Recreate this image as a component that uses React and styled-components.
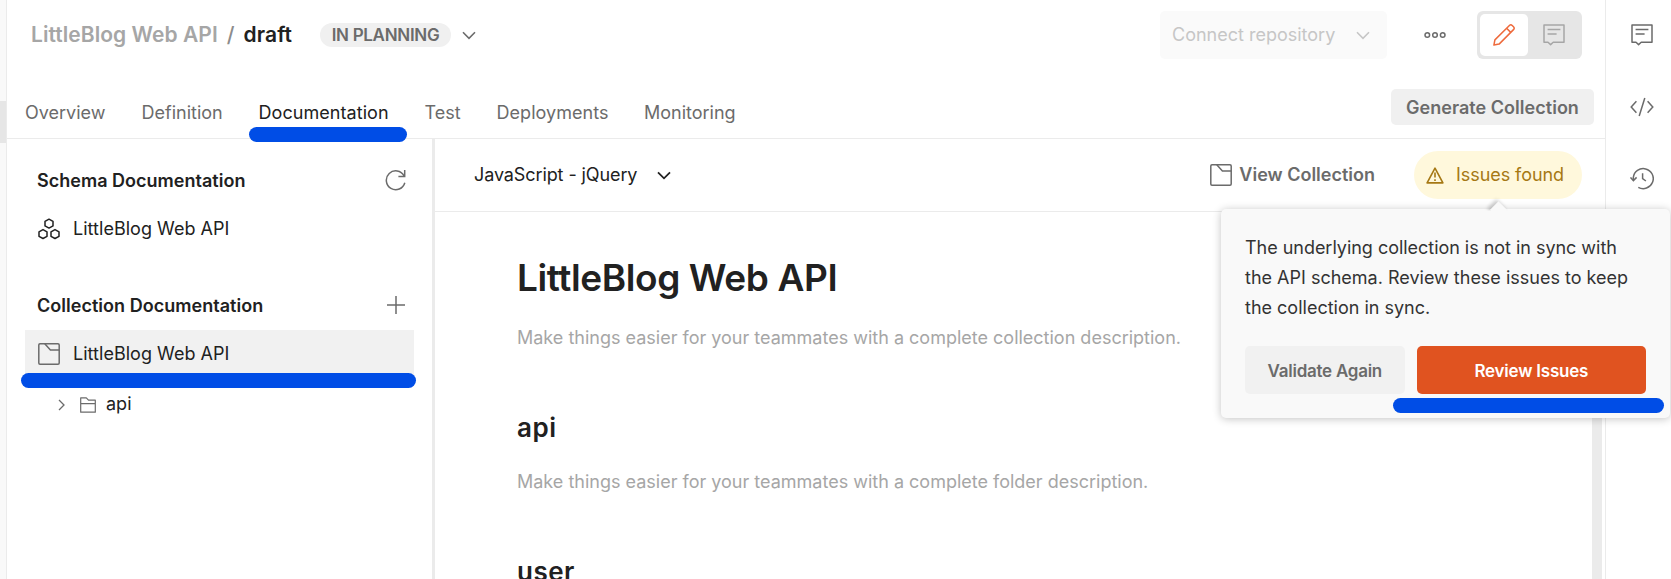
import React from "react";
import styled, { createGlobalStyle, css } from "styled-components";

const Global = createGlobalStyle`
  *, *::before, *::after { box-sizing: border-box; }
  html, body { margin: 0; padding: 0; background: #fff; overflow: hidden; }
  body { font-family: Inter, "Liberation Sans", sans-serif; font-size: 18px; color: #212121; }
  button { font: inherit; border: 0; padding: 0; background: none; cursor: pointer; }
  h1, h2, h3, p { margin: 0; }
  svg { display: block; flex: none; }
`;

const Page = styled.div`
  display: flex;
  width: 1671px;
  height: 579px;
  overflow: hidden;
  background: #fff;
`;

const Gutter = styled.div`
  flex: none;
  width: 7px;
  padding-top: 101px;
  background: #f9f9f9;
  border-right: 1px solid #ebebeb;
`;

const GutterThumb = styled.div`
  height: 42px;
  background: #e6e6e6;
`;

const Workspace = styled.main`
  flex: none;
  width: 1598px;
  height: 100%;
  display: flex;
  flex-direction: column;
`;

const Header = styled.header`
  flex: none;
  height: 70px;
  display: flex;
  align-items: center;
  padding: 0 23px 0 24px;
`;

const Text = styled.span`
  white-space: nowrap;
  font-size: ${(p) => p.$size || 18}px;
  font-weight: ${(p) => p.$weight || 400};
  letter-spacing: ${(p) => p.$track || 0}px;
  color: ${(p) => p.$color || "inherit"};
  padding-bottom: ${(p) => (p.$raised ? 2 : 0)}px;
`;

const Crumbs = styled.div`
  display: flex;
  width: 289px;
  gap: 9px;
`;

const Badge = styled.span`
  width: 131px;
  height: 24px;
  margin-right: 11px;
  border-radius: 12px;
  background: #f0f0f0;
  display: flex;
  align-items: center;
  justify-content: center;
`;

const Spacer = styled.div`
  flex: 1;
`;

const ConnectButton = styled.button`
  width: 227px;
  height: 48px;
  padding: 0 17px 0 12px;
  border-radius: 5px;
  background: #fafafa;
  display: flex;
  align-items: center;
  justify-content: space-between;
`;

const MoreButton = styled.button`
  margin: 0 30px 0 36px;
`;

const ModeToggle = styled.div`
  width: 105px;
  height: 48px;
  padding: 3px;
  border-radius: 6px;
  background: #e6e6e6;
  display: flex;
`;

const Mode = styled.button`
  width: ${(p) => (p.$active ? 48 : 51)}px;
  display: flex;
  align-items: center;
  justify-content: center;
  border-radius: 5px;
  background: ${(p) => (p.$active ? "#fff" : "transparent")};
`;

const TabBar = styled.nav`
  flex: none;
  height: 69px;
  display: flex;
  align-items: flex-start;
  padding: 19px 11px 0 18px;
  border-bottom: 1px solid #ebebeb;
`;

const Tab = styled.a`
  position: relative;
  margin-top: 12px;
  line-height: 24px;
  letter-spacing: ${(p) => p.$track || 0}px;
  width: ${(p) => p.$width}px;
  color: ${(p) => (p.$active ? "#212121" : "#6b6b6b")};
`;

const Marker = styled.span`
  position: absolute;
  left: ${(p) => p.$left}px;
  top: ${(p) => p.$top}px;
  width: ${(p) => p.$width}px;
  height: 15px;
  border-radius: 8px;
  background: #004de6;
`;

const GenerateButton = styled.button`
  width: 203px;
  height: 36px;
  border-radius: 5px;
  background: #f0f0f0;
`;

const Columns = styled.div`
  flex: 1;
  min-height: 0;
  display: flex;
`;

const Sidebar = styled.aside`
  flex: none;
  width: 428px;
  padding: 16px 18px 0 18px;
  border-right: 3px solid #ebebeb;
`;

const SectionHead = styled.div`
  height: 50px;
  padding: 0 7px 0 12px;
  display: flex;
  align-items: center;
  justify-content: space-between;
`;

const Item = styled.div`
  position: relative;
  height: 48px;
  padding-left: 13px;
  display: flex;
  align-items: center;
  gap: 13px;
  margin-bottom: ${(p) => p.$after || 0}px;
  background: ${(p) => (p.$selected ? "#f1f1f1" : "transparent")};
`;

const SubItem = styled.div`
  height: 53px;
  padding-left: 33px;
  display: flex;
  align-items: center;
  gap: 10px;
`;

const Caret = styled.svg`
  margin-right: 4px;
`;

const Content = styled.section`
  flex: 1;
  min-width: 0;
  display: flex;
  flex-direction: column;
`;

const ContentBar = styled.div`
  flex: none;
  height: 73px;
  padding: 0 23px 0 39px;
  border-bottom: 1px solid #ebebeb;
  display: flex;
  align-items: center;
`;

const Language = styled.button`
  display: flex;
  align-items: center;
  gap: 20px;
`;

const ViewCollection = styled.button`
  display: flex;
  align-items: center;
  gap: 7px;
  margin-right: 39px;
`;

const IssuesPill = styled.button`
  width: 168px;
  height: 48px;
  padding-left: 12px;
  border-radius: 24px;
  background: #fff8dc;
  display: flex;
  align-items: center;
  gap: 12px;
`;

const DocScroll = styled.div`
  flex: 1;
  min-height: 0;
  display: flex;
  justify-content: space-between;
  padding-right: 3px;
`;

const Doc = styled.article`
  padding: 42px 0 0 82px;
  overflow: hidden;
`;

const heading = css`
  font-weight: 600;
  color: #212121;
  white-space: nowrap;
`;

const Title = styled.h1`
  ${heading}
  font-size: 37px;
  line-height: 48px;
  letter-spacing: -0.4px;
`;

const SubTitle = styled.h2`
  ${heading}
  font-size: 26px;
  line-height: 36px;
  letter-spacing: 0.5px;
  margin-top: ${(p) => p.$gap}px;
`;

const Hint = styled.p`
  font-size: 18px;
  line-height: 28px;
  color: #a6a6a6;
  white-space: nowrap;
  margin-top: ${(p) => p.$gap}px;
`;

const Scrollbar = styled.div`
  width: 10px;
  background: #ebebeb;
`;

const Rail = styled.aside`
  flex: 1;
  border-left: 1px solid #ebebeb;
  padding: 24px 0 0 7px;
  display: flex;
  flex-direction: column;
  align-items: center;
  gap: 49px;
`;

const Popover = styled.div`
  position: absolute;
  left: 1221px;
  top: 209px;
  width: 449px;
  height: 209px;
  padding: 24px;
  border-radius: 5px;
  background: #f9f9f9;
  box-shadow: 0 1px 8px rgba(0, 0, 0, 0.24);

  &::before {
    content: "";
    position: absolute;
    left: 271px;
    top: -5px;
    width: 13px;
    height: 13px;
    transform: rotate(45deg);
    background: #f9f9f9;
    box-shadow: -3px 0 4px rgba(0, 0, 0, 0.2);
    clip-path: polygon(-60% -60%, 160% -60%, -60% 160%);
  }
`;

const Message = styled.p`
  line-height: 30px;
  color: #333;
  white-space: nowrap;
`;

const Line = styled.span`
  display: block;
  letter-spacing: ${(p) => p.$track || 0}px;
`;

const Actions = styled.div`
  margin-top: 23px;
  display: flex;
  gap: 12px;
`;

const Action = styled.button`
  width: ${(p) => (p.$primary ? 230 : 160)}px;
  height: 48px;
  border-radius: 5px;
  color: ${(p) => (p.$primary ? "#fff" : "#6b6b6b")};
  background: ${(p) => (p.$primary ? "#e05320" : "#f1f1f1")};
`;

const Chevron = ({ color = "#6b6b6b", width = 1.6 }) => (
  <svg width="14" height="9" viewBox="0 0 14 9" fill="none" stroke={color} strokeWidth={width}>
    <path d="M1 1.3l6 6 6-6" />
  </svg>
);

const CommentIcon = ({ color = "#6b6b6b" }) => (
  <svg width="22" height="22" viewBox="0 0 22 22" fill="none" stroke={color} strokeWidth="1.5" strokeLinejoin="round">
    <path d="M1 1h20v17.3H10.2l-2.6 2.3L5 18.3H1z" />
    <path d="M4.6 5.6h12.8M4.6 9.9h9" />
  </svg>
);

const PencilIcon = () => (
  <svg width="22" height="22" viewBox="0 0 22 22" fill="none" stroke="#ee6a3c" strokeWidth="1.5" strokeLinejoin="round">
    <path d="M0.9 21.1l1-5.2L16.4 1.5a2 2 0 0 1 2.8 0l1.3 1.3a2 2 0 0 1 0 2.8L6.1 20.1z" />
    <path d="M13.6 4.3l4.1 4.1" />
  </svg>
);

const CollectionIcon = () => (
  <svg width="22" height="22" viewBox="0 0 22 22" fill="none" stroke="#6b6b6b" strokeWidth="1.5" strokeLinejoin="round">
    <rect x="0.8" y="0.8" width="20.4" height="20.4" rx="1.2" />
    <path d="M6.8 0.8l5.6 6.2h8.8" />
  </svg>
);

const SchemaIcon = () => (
  <svg width="22" height="22" viewBox="0 0 22 22" fill="none" stroke="#212121" strokeWidth="1.5" strokeLinejoin="round">
    <path d="M11 1.2l4 2.2v4.5l-4 2.2-4-2.2V3.4z" />
    <path d="M5 11.6l4 2.2v4.5l-4 2.2-4-2.2v-4.5z" />
    <path d="M17 11.6l4 2.2v4.5l-4 2.2-4-2.2v-4.5z" />
  </svg>
);

const RefreshIcon = () => (
  <svg width="22" height="22" viewBox="0 0 22 22" fill="none" stroke="#6b6b6b" strokeWidth="1.5">
    <path d="M19.8 13.7A9.4 9.4 0 1 1 19 6.8" />
    <path d="M19.7 1v6.4h-6.3" />
  </svg>
);

const PlusIcon = () => (
  <svg width="22" height="22" viewBox="0 0 22 22" fill="none" stroke="#6b6b6b" strokeWidth="1.5">
    <path d="M11 2v18M2 11h18" />
  </svg>
);

const FolderIcon = () => (
  <svg width="16" height="16" viewBox="0 0 16 16" fill="none" stroke="#6b6b6b" strokeWidth="1.2" strokeLinejoin="round">
    <path d="M0.7 15.2V0.8h5.6l2.2 2.4h6.8v12zM0.7 6.6h14.6" />
  </svg>
);

const WarningIcon = () => (
  <svg width="18" height="17" viewBox="0 0 18 17" fill="none" stroke="#a67814" strokeWidth="1.6" strokeLinejoin="round">
    <path d="M9 1.1L16.9 15.9H1.1z" />
    <path d="M9 5.6v5M9 12.2v1.8" />
  </svg>
);

const CodeIcon = () => (
  <svg width="24" height="22" viewBox="0 0 24 22" fill="none" stroke="#6b6b6b" strokeWidth="1.5">
    <path d="M6.4 6.2L1.2 12l5.2 5.8M17.6 6.2l5.2 5.8-5.2 5.8M14.8 3L9.2 21" />
  </svg>
);

const HistoryIcon = () => (
  <svg width="24" height="24" viewBox="0 0 24 24" fill="none" stroke="#6b6b6b" strokeWidth="1.5">
    <path d="M3.3 14.2V11.6A10 10 0 1 1 8.3 21.3" />
    <path d="M0.5 11.4l2.9 3.2 3.2-3.2M12.6 7.2v5.4l3.3 2.4" />
  </svg>
);

const tabs = [
  { label: "Overview", width: 116.5 },
  { label: "Definition", width: 117 },
  { label: "Documentation", width: 166, active: true, track: 0.06 },
  { label: "Test", width: 72 },
  { label: "Deployments", width: 147.5, track: 0.05 },
  { label: "Monitoring", width: 100 },
];

export default function App() {
  return (
    <>
      <Global />
      <Page>
        <Gutter>
          <GutterThumb />
        </Gutter>
        <Workspace>
          <Header>
            <Crumbs>
              <Text $size={21} $weight={600} $color="#a6a6a6" $track={0.05} $raised>LittleBlog Web API</Text>
              <Text $size={21} $weight={500} $color="#8c8c8c">/</Text>
              <Text $size={21} $weight={600} $track={0.1}>draft</Text>
            </Crumbs>
            <Badge>
              <Text $size={17} $weight={600} $color="#6b6b6b" $track={-0.3}>IN PLANNING</Text>
            </Badge>
            <Chevron />
            <Spacer />
            <ConnectButton>
              <Text $color="#c6c6c6" $raised>Connect repository</Text>
              <Chevron color="#c6c6c6" />
            </ConnectButton>
            <MoreButton>
              <svg width="24" height="8" viewBox="0 0 24 8" fill="none" stroke="#6b6b6b" strokeWidth="1.5">
                <circle cx="4.3" cy="4" r="2.3" />
                <circle cx="12" cy="4" r="2.3" />
                <circle cx="19.7" cy="4" r="2.3" />
              </svg>
            </MoreButton>
            <ModeToggle>
              <Mode $active><PencilIcon /></Mode>
              <Mode><CommentIcon color="#a6a6a6" /></Mode>
            </ModeToggle>
          </Header>
          <TabBar>
            {tabs.map((t) => (
              <Tab key={t.label} $width={t.width} $active={t.active} $track={t.track}>
                {t.label}
                {t.active && <Marker $left={-10} $top={26} $width={158} />}
              </Tab>
            ))}
            <Spacer />
            <GenerateButton>
              <Text $weight={600} $color="#6b6b6b" $track={0.03}>Generate Collection</Text>
            </GenerateButton>
          </TabBar>
          <Columns>
            <Sidebar>
              <SectionHead>
                <Text $weight={600} $track={0.02}>Schema Documentation</Text>
                <RefreshIcon />
              </SectionHead>
              <Item $after={27}>
                <SchemaIcon />
                <Text $track={0.03} $raised>LittleBlog Web API</Text>
              </Item>
              <SectionHead>
                <Text $weight={600} $track={0.03}>Collection Documentation</Text>
                <PlusIcon />
              </SectionHead>
              <Item $selected>
                <CollectionIcon />
                <Text $track={0.03} $raised>LittleBlog Web API</Text>
                <Marker $left={-4} $top={43} $width={395} />
              </Item>
              <SubItem>
                <Caret width="8" height="12" viewBox="0 0 8 12" fill="none" stroke="#6b6b6b" strokeWidth="1.3">
                  <path d="M1 1l5 5-5 5" />
                </Caret>
                <FolderIcon />
                <Text $raised>api</Text>
              </SubItem>
            </Sidebar>
            <Content>
              <ContentBar>
                <Language>
                  <Text $color="#212121" $track={-0.1} $raised>JavaScript - jQuery</Text>
                  <Chevron color="#212121" width={1.8} />
                </Language>
                <Spacer />
                <ViewCollection>
                  <CollectionIcon />
                  <Text $weight={600} $color="#6b6b6b" $raised>View Collection</Text>
                </ViewCollection>
                <IssuesPill>
                  <WarningIcon />
                  <Text $color="#a67814" $track={-0.06} $raised>Issues found</Text>
                </IssuesPill>
              </ContentBar>
              <DocScroll>
                <Doc>
                  <Title>LittleBlog Web API</Title>
                  <Hint $gap={22}>Make things easier for your teammates with a complete collection description.</Hint>
                  <SubTitle $gap={58}>api</SubTitle>
                  <Hint $gap={22}>Make things easier for your teammates with a complete folder description.</Hint>
                  <SubTitle $gap={58}>user</SubTitle>
                </Doc>
                <Scrollbar />
              </DocScroll>
            </Content>
          </Columns>
        </Workspace>
        <Rail>
          <CommentIcon />
          <CodeIcon />
          <HistoryIcon />
        </Rail>
        <Popover>
          <Message>
            <Line $track={-0.03}>The underlying collection is not in sync with</Line>
            <Line>the API schema. Review these issues to keep</Line>
            <Line>the collection in sync.</Line>
          </Message>
          <Actions>
            <Action><Text $weight={600} $size={17} $track={-0.25}>Validate Again</Text></Action>
            <Action $primary><Text $weight={600} $size={17} $track={-0.22}>Review Issues</Text></Action>
          </Actions>
          <Marker $left={172} $top={189} $width={271} />
        </Popover>
      </Page>
    </>
  );
}
